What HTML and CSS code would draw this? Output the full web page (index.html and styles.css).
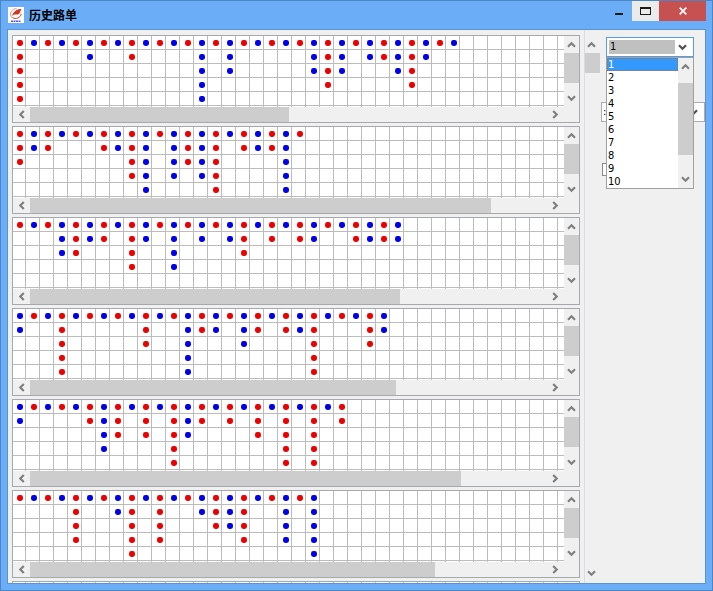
FILE: index.html
```html
<!DOCTYPE html>
<html lang="zh-CN">
<head>
    <meta charset="UTF-8">
    <meta name="viewport" content="width=device-width, initial-scale=1.0">
    <title>历史路单</title>
    <link rel="stylesheet" href="styles.css">
</head>
<body>

    <!-- Arrow glyph shared by every scrollbar and drop-down -->
    <svg class="defs" aria-hidden="true">
        <symbol id="chevron" viewBox="0 0 9 7">
            <path d="M1 1.2 4.5 4.7 8 1.2" fill="none" stroke="currentColor" stroke-width="2.2"/>
        </symbol>
    </svg>

    <div class="window">
        <!-- Title bar -->
        <header class="title-bar">
            <svg class="app-icon" viewBox="0 0 16 16" aria-hidden="true">
                <rect width="16" height="16" fill="#fff"/>
                <path d="M8.500 1.500C5 1.700 2.500 4 2.500 7c0 1.500.6 2.900 1.700 3.900" fill="none" stroke="#e8988c" stroke-width="1"/>
                <path d="M13.500 2C9.500 2 5.800 3.500 3.800 9.300 6.500 6.200 8.500 8.300 10.500 7.300 12 6.500 12.300 4 13.500 2z" fill="#d8331f"/>
                <path d="M4.500 10.500C8 12.700 12.300 11 13.300 6.800" fill="none" stroke="#d8331f" stroke-width="1"/>
                <path d="M3 14.200h10" stroke="#5a5ad0" stroke-width="1.600" stroke-dasharray="2 .5"/>
            </svg>
            <h1 class="title">历史路单</h1>
            <div class="window-buttons">
                <button class="win-btn minimize" aria-label="最小化">
                    <svg width="10" height="12" viewBox="0 0 10 12"><path d="M1 9h8" stroke="#1a1a1a" stroke-width="2"/></svg>
                </button>
                <button class="win-btn maximize" aria-label="最大化">
                    <svg width="11" height="8" viewBox="0 0 11 8"><path d="M.5 0v8M10.500 0v8M0 7.500h11" fill="none" stroke="#1a1a1a"/><path d="M0 1h11" stroke="#1a1a1a" stroke-width="2"/></svg>
                </button>
                <button class="win-btn close" aria-label="关闭">
                    <svg width="8" height="8" viewBox="0 0 8 8"><path d="M.7.7l6.600 6.600M7.300.7.7 7.300" stroke="#fff" stroke-width="1.700"/></svg>
                </button>
            </div>
        </header>

        <div class="client">
            <main class="road-list" id="road-list"></main>

            <!-- Scrollbar of the whole list -->
            <div class="scroll-v list-scroll">
                <button class="scroll-btn up" aria-label="向上"><svg><use href="#chevron"/></svg></button>
                <div class="track"><div class="thumb"></div></div>
                <button class="scroll-btn down" aria-label="向下"><svg><use href="#chevron"/></svg></button>
            </div>

            <aside class="side">
                <div class="combo">
                    <select class="combo-value" aria-label="编号">
                        <option>1</option>
                    </select>
                    <svg class="combo-arrow"><use href="#chevron"/></svg>
                    <div class="drop-list">
                        <select class="drop-options" size="10" aria-label="编号列表">
                            <option selected>1</option>
                            <option>2</option>
                            <option>3</option>
                            <option>4</option>
                            <option>5</option>
                            <option>6</option>
                            <option>7</option>
                            <option>8</option>
                            <option>9</option>
                            <option>10</option>
                        </select>
                        <div class="scroll-v drop-scroll">
                            <button class="scroll-btn up" aria-label="向上"><svg><use href="#chevron"/></svg></button>
                            <div class="track"><div class="thumb"></div></div>
                            <button class="scroll-btn down" aria-label="向下"><svg><use href="#chevron"/></svg></button>
                        </div>
                    </div>
                </div>

                <div class="combo wide">
                    <select class="combo-value" aria-label="选项">
                        <option>:</option>
                    </select>
                    <svg class="combo-arrow"><use href="#chevron"/></svg>
                </div>

                <input class="check" type="checkbox" checked aria-label="启用">
            </aside>
        </div>
    </div>

    <script src="script.js"></script>
</body>
</html>
```
FILE: styles.css
```css
* {
    box-sizing: border-box;
}
body {
    margin: 0;
    font-family: "DejaVu Sans Condensed", "DejaVu Sans", "Noto Sans CJK SC", sans-serif;
    font-size: 11px;
    color: #000;
}
button {
    padding: 0;
    border: none;
    background: none;
    font: inherit;
}
.defs {
    position: absolute;
    width: 0;
    height: 0;
}

/* Window frame */
.window {
    display: flex;
    flex-direction: column;
    height: 100vh;
    padding: 0 6px 6px;
    background-color: #6badf6;
    border: 1px solid #4a86c5;
}
.title-bar {
    display: flex;
    align-items: center;
    height: 28px;
    flex: none;
    padding-left: 1px;
}
.app-icon {
    width: 16px;
    height: 16px;
}
.title {
    margin: 0 0 0 5px;
    font-family: "Noto Sans CJK SC", sans-serif;
    font-size: 12px;
    line-height: 28px;
    font-weight: bold;
}
.window-buttons {
    display: flex;
    align-self: flex-start;
    margin-left: auto;
}
.win-btn {
    display: flex;
    align-items: center;
    justify-content: center;
    width: 27px;
    height: 20px;
}
.maximize {
    background-color: #ebebeb;
}
.close {
    width: 47px;
    background-color: #c75050;
}
.client {
    display: flex;
    flex: 1;
    min-height: 0;
    background-color: #f0f0f0;
    border: 1px solid #5a93d0;
}

/* Road panels */
.road-list {
    display: flex;
    flex-direction: column;
    flex: 1;
    gap: 3px;
    min-width: 0;
    overflow: hidden;
    padding: 5px 4px 0;
    border-right: 1px solid #dcdcdc;
}
.road {
    display: grid;
    grid-template-columns: 1fr 15px;
    flex: none;
    border: 1px solid #a5a8ad;
}
.road-view {
    height: 71px;
    overflow: hidden;
    background-color: #fff;
}
.road-table {
    table-layout: fixed;
    width: 0;
    border-collapse: separate;
    border-spacing: 0;
}
.road-table td {
    width: 14px;
    height: 14px;
    padding: 0 0 0 5px;
    line-height: 0;
    border-right: 1px solid #bcbcbc;
    border-bottom: 1px solid #bcbcbc;
}
.road-table td:first-child {
    width: 13px;
    padding-left: 4px;
}
.dot {
    display: block;
    width: 6px;
    height: 6px;
    border-radius: 40%;
}
.red {
    background-color: #ee0000;
}
.blue {
    background-color: #0000ee;
}

/* Scrollbars */
.scroll-v {
    display: flex;
    flex-direction: column;
    width: 15px;
    background-color: #f0f0f0;
}
.scroll-h {
    display: flex;
    height: 15px;
    background-color: #f0f0f0;
}
.scroll-btn {
    display: flex;
    align-items: center;
    justify-content: center;
    flex: none;
    width: 15px;
    height: 17px;
    color: #808080;
}
.scroll-h .scroll-btn {
    width: 17px;
    height: 15px;
}
.scroll-btn svg,
.combo-arrow {
    width: 9px;
    height: 7px;
}
.up svg {
    transform: rotate(180deg);
}
.left svg {
    transform: rotate(90deg);
}
.right svg {
    transform: rotate(-90deg);
}
.track {
    flex: 1;
}
.thumb {
    height: 100%;
    background-color: #cdcdcd;
}
.road .scroll-v .thumb {
    height: 30px;
}
.list-scroll {
    padding: 6px 0 1px;
}
.list-scroll .scroll-btn {
    width: 12px;
}
.list-scroll .thumb {
    height: 20px;
}

/* Side controls */
.side {
    display: flex;
    flex-direction: column;
    align-items: flex-start;
    width: 105px;
    padding-top: 7px;
}
.combo {
    position: relative;
    z-index: 1;
    width: 88px;
    height: 20px;
    margin-left: 6px;
    padding: 2px;
    background-color: #fff;
    border: 1px solid #569de5;
}
.combo-value {
    display: block;
    width: 66px;
    height: 14px;
    padding: 0 1px;
    appearance: none;
    border: none;
    border-radius: 0;
    background-color: #c0c0c0;
    color: #000;
    font: inherit;
    line-height: 14px;
}
.combo-arrow {
    position: absolute;
    top: 6px;
    right: 6px;
    color: #505050;
}
.combo.wide {
    z-index: 0;
    width: 104px;
    margin: 45px 0 0 1px;
    padding-left: 0;
    border-color: #acacac;
}
.wide .combo-value {
    background-color: #fff;
}
.check {
    width: 13px;
    height: 13px;
    margin: 41px 0 0 2px;
    appearance: none;
    background: radial-gradient(circle, #444 2px, #fff 3px);
    border: 1px solid #888;
}

/* Open list */
.drop-list {
    position: absolute;
    top: 19px;
    left: -1px;
    display: flex;
    width: 88px;
    height: 132px;
    background-color: #fff;
    border: 1px solid #a0a0a0;
}
.drop-options {
    flex: 1;
    min-width: 0;
    height: 130px;
    padding: 0;
    overflow: hidden;
    border: none;
    border-radius: 0;
    outline: none;
    background-color: #fff;
    font: inherit;
}
.drop-options option {
    height: 13px;
    min-height: 0;
    padding: 0 1px;
    line-height: 13px;
    color: #000;
}
.drop-options option:checked {
    background: linear-gradient(#3399ff, #3399ff);
    color: #fff;
    outline: 1px dotted #b07030;
    outline-offset: -1px;
}
.drop-scroll .track {
    padding: 8px 0;
}
.drop-scroll .thumb {
    height: 72px;
}
```
FILE: script.js
```javascript
// Each road: colour of the first column, length of every streak,
// and how much of the horizontal track the thumb fills (percent)
const roads = [
    { first: 'red', scroll: 50, runs: [5,1,1,1,1,2,1,1,2,1,1,1,1,5,1,3,1,1,1,1,1,3,4,3,1,2,2,3,4,2,1,1] },
    { first: 'red', scroll: 89.2, runs: [3,2,2,1,1,1,2,2,4,5,1,4,3,4,5,1,2,2,2,5,1] },
    { first: 'red', scroll: 71.5, runs: [1,1,1,3,3,2,2,1,4,2,1,4,1,2,1,2,3,1,2,1,2,2,1,1,2,2,2,2] },
    { first: 'blue', scroll: 70.8, runs: [2,1,1,5,1,1,1,1,1,3,1,1,5,2,2,1,3,2,1,2,2,5,1,1,1,3,2] },
    { first: 'blue', scroll: 83.3, runs: [2,1,1,1,1,2,4,3,1,3,1,5,3,2,1,2,1,3,1,5,1,5,1,2] },
    { first: 'red', scroll: 78.3, runs: [1,1,1,1,4,1,1,2,5,1,4,1,1,2,3,3,4,1,1,4,1,5] },
    { first: 'red', scroll: 60, runs: [] }
];

const ROWS = 6;
const COLS = 80;

function buildTable(road) {
    const other = road.first === 'red' ? 'blue' : 'red';
    let html = '<table class="road-table">';
    for (let row = 0; row < ROWS; row++) {
        html += '<tr>';
        for (let col = 0; col < COLS; col++) {
            const color = col % 2 === 0 ? road.first : other;
            html += row < road.runs[col] ? `<td><span class="dot ${color}"></span></td>` : '<td></td>';
        }
        html += '</tr>';
    }
    return html + '</table>';
}

function scrollButton(dir, label) {
    return `<button class="scroll-btn ${dir}" aria-label="${label}"><svg><use href="#chevron"/></svg></button>`;
}

document.getElementById('road-list').innerHTML = roads.map(road => `
    <section class="road">
        <div class="road-view">${buildTable(road)}</div>
        <div class="scroll-v">
            ${scrollButton('up', '向上')}
            <div class="track"><div class="thumb"></div></div>
            ${scrollButton('down', '向下')}
        </div>
        <div class="scroll-h">
            ${scrollButton('left', '向左')}
            <div class="track"><div class="thumb" style="width: ${road.scroll}%"></div></div>
            ${scrollButton('right', '向右')}
        </div>
    </section>`).join('');
```
